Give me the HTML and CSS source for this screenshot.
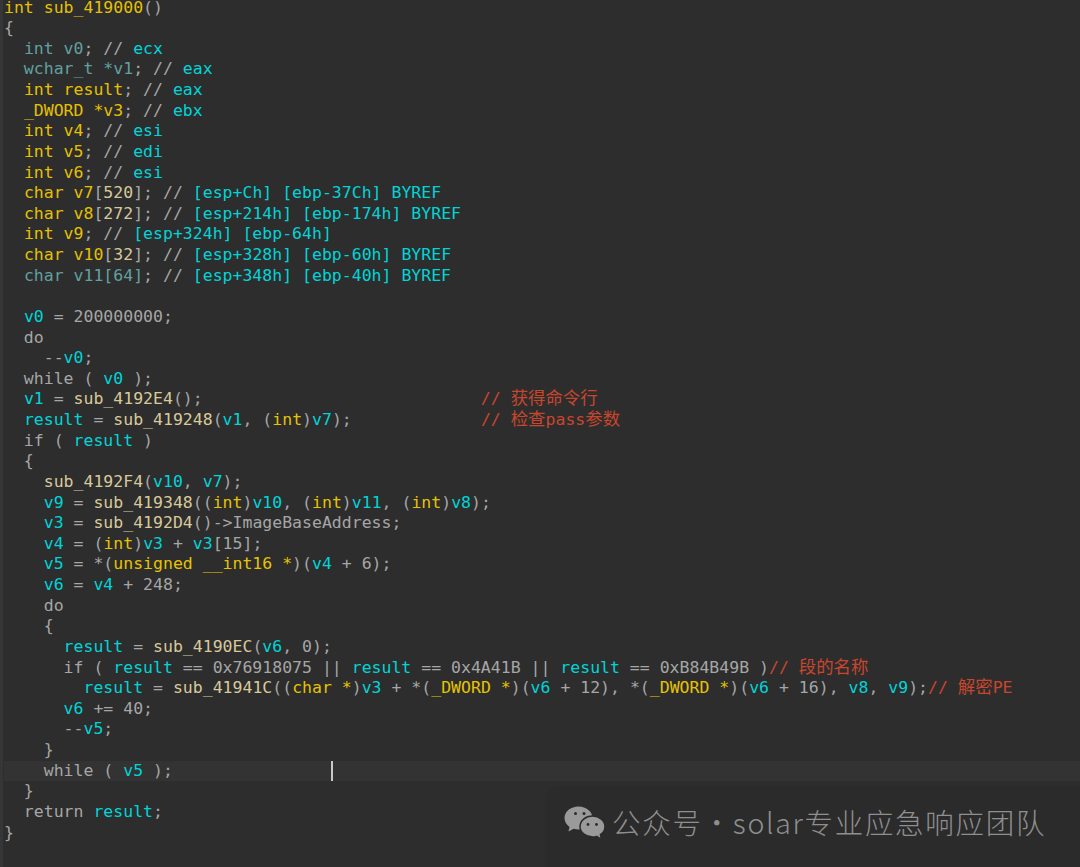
FILE: index.html
```html
<!DOCTYPE html>
<html lang="zh">
<head>
<meta charset="utf-8">
<title>sub_419000</title>
<link rel="stylesheet" href="styles.css">
</head>
<body>
<main class="editor">
<div class="ln"><span class="k">int sub_419000</span><span class="p">()</span></div>
<div class="ln"><span class="p">{</span></div>
<div class="ln">  <span class="kd">int v0</span><span class="p">; // </span><span class="c">ecx</span></div>
<div class="ln"><span class="kd">  wchar_t *v1</span><span class="p">; // </span><span class="c">eax</span></div>
<div class="ln">  <span class="k">int result</span><span class="p">; // </span><span class="c">eax</span></div>
<div class="ln">  <span class="k">_DWORD *v3</span><span class="p">; // </span><span class="c">ebx</span></div>
<div class="ln">  <span class="k">int v4</span><span class="p">; // </span><span class="c">esi</span></div>
<div class="ln">  <span class="k">int v5</span><span class="p">; // </span><span class="c">edi</span></div>
<div class="ln">  <span class="k">int v6</span><span class="p">; // </span><span class="c">esi</span></div>
<div class="ln">  <span class="k">char v7</span><span class="p">[</span><span class="f">520</span><span class="p">]; // </span><span class="c">[esp+Ch] [ebp-37Ch] BYREF</span></div>
<div class="ln">  <span class="k">char v8</span><span class="p">[</span><span class="f">272</span><span class="p">]; // </span><span class="c">[esp+214h] [ebp-174h] BYREF</span></div>
<div class="ln">  <span class="k">int v9</span><span class="p">; // </span><span class="c">[esp+324h] [ebp-64h]</span></div>
<div class="ln">  <span class="k">char v10</span><span class="p">[</span><span class="f">32</span><span class="p">]; // </span><span class="c">[esp+328h] [ebp-60h] BYREF</span></div>
<div class="ln">  <span class="kd">char v11[64]</span><span class="p">; // </span><span class="c">[esp+348h] [ebp-40h] BYREF</span></div>
<div class="ln"> </div>
<div class="ln">  <span class="c">v0</span><span class="p"> = 200000000;</span></div>
<div class="ln"><span class="p">  do</span></div>
<div class="ln"><span class="p">    --</span><span class="c">v0</span><span class="p">;</span></div>
<div class="ln"><span class="p">  while ( </span><span class="c">v0</span><span class="p"> );</span></div>
<div class="ln">  <span class="c">v1</span><span class="p"> = </span><span class="f">sub_4192E4</span><span class="p">();</span><span class="r">                            // <span class="zh">获得命令行</span></span></div>
<div class="ln">  <span class="c">result</span><span class="p"> = </span><span class="f">sub_419248</span><span class="p">(</span><span class="c">v1</span><span class="p">, (</span><span class="y">int</span><span class="p">)</span><span class="c">v7</span><span class="p">);</span><span class="r">             // <span class="zh">检查</span>pass<span class="zh">参数</span></span></div>
<div class="ln"><span class="p">  if ( </span><span class="c">result</span><span class="p"> )</span></div>
<div class="ln"><span class="p">  {</span></div>
<div class="ln">    <span class="f">sub_4192F4</span><span class="p">(</span><span class="c">v10</span><span class="p">, </span><span class="c">v7</span><span class="p">);</span></div>
<div class="ln">    <span class="c">v9</span><span class="p"> = </span><span class="f">sub_419348</span><span class="p">((</span><span class="y">int</span><span class="p">)</span><span class="c">v10</span><span class="p">, (</span><span class="y">int</span><span class="p">)</span><span class="c">v11</span><span class="p">, (</span><span class="y">int</span><span class="p">)</span><span class="c">v8</span><span class="p">);</span></div>
<div class="ln">    <span class="c">v3</span><span class="p"> = </span><span class="f">sub_4192D4</span><span class="p">()-&gt;ImageBaseAddress;</span></div>
<div class="ln">    <span class="c">v4</span><span class="p"> = (</span><span class="y">int</span><span class="p">)</span><span class="c">v3</span><span class="p"> + </span><span class="c">v3</span><span class="p">[15];</span></div>
<div class="ln">    <span class="c">v5</span><span class="p"> = *(</span><span class="y">unsigned __int16 *</span><span class="p">)(</span><span class="c">v4</span><span class="p"> + 6);</span></div>
<div class="ln">    <span class="c">v6</span><span class="p"> = </span><span class="c">v4</span><span class="p"> + 248;</span></div>
<div class="ln"><span class="p">    do</span></div>
<div class="ln"><span class="p">    {</span></div>
<div class="ln">      <span class="c">result</span><span class="p"> = </span><span class="f">sub_4190EC</span><span class="p">(</span><span class="c">v6</span><span class="p">, 0);</span></div>
<div class="ln"><span class="p">      if ( </span><span class="c">result</span><span class="p"> == 0x76918075 || </span><span class="c">result</span><span class="p"> == 0x4A41B || </span><span class="c">result</span><span class="p"> == 0xB84B49B )</span><span class="r">// <span class="zh">段的名称</span></span></div>
<div class="ln">        <span class="c">result</span><span class="p"> = </span><span class="f">sub_41941C</span><span class="p">((</span><span class="y">char *</span><span class="p">)</span><span class="c">v3</span><span class="p"> + *(</span><span class="y">_DWORD *</span><span class="p">)(</span><span class="c">v6</span><span class="p"> + 12), *(</span><span class="y">_DWORD *</span><span class="p">)(</span><span class="c">v6</span><span class="p"> + 16), </span><span class="c">v8</span><span class="p">, </span><span class="c">v9</span><span class="p">);</span><span class="r">// <span class="zh">解密</span>PE</span></div>
<div class="ln">      <span class="c">v6</span><span class="p"> += 40;</span></div>
<div class="ln"><span class="p">      --</span><span class="c">v5</span><span class="p">;</span></div>
<div class="ln"><span class="p">    }</span></div>
<div class="ln cur"><span class="p">    while ( </span><span class="c">v5</span><span class="p"> );</span><span class="caret"></span></div>
<div class="ln"><span class="p">  }</span></div>
<div class="ln"><span class="p">  return </span><span class="c">result</span><span class="p">;</span></div>
<div class="ln"><span class="p">}</span></div>
</main>
<aside class="mark">
<svg class="wx" viewBox="0 0 42 34" width="42" height="34" aria-hidden="true">
<path class="wx-a" d="M14.500 0.500C6.800 0.500 0.500 5.600 0.500 12c0 3.500 1.900 6.700 5 8.900L4.500 25.500l5.200-2.700c1.500.4 3.100.7 4.800.7 7.700 0 14-5.200 14-11.500S22.200 0.500 14.500 0.500z"/>
<path class="wx-b" d="M28.500 10c-6.900 0-12.500 4.700-12.500 10.500S21.600 31 28.500 31c1.500 0 2.900-.2 4.200-.6l4.800 3-1.100-4.700c2.800-1.900 4.600-4.800 4.600-8.200C41 14.700 35.400 10 28.500 10z"/>
<circle class="wx-e" cx="11.500" cy="7.500" r="1.500"/><circle class="wx-e" cx="20" cy="7.500" r="1.500"/>
<circle class="wx-e" cx="24" cy="18.500" r="1.400"/><circle class="wx-e" cx="32.500" cy="18.500" r="1.400"/>
</svg>
<span class="mark-t">公众号 · solar专业应急响应团队</span>
</aside>
</body>
</html>
```
FILE: styles.css
```css
html, body { margin: 0; height: 867px; overflow: hidden; background: #2d2d2d; }
body { position: relative; border-left: 3px solid #363636; box-sizing: border-box; width: 1080px; }
.editor {
  margin-top: -2.500px;
  padding-left: 1px;
  font-family: "DejaVu Sans Mono", monospace;
  font-size: 16.5px;
  color: #a9a9a9;
}
.ln { height: 20.63px; line-height: 20.63px; white-space: pre; position: relative; }
.cur { background: #333333; }
.caret { position: absolute; left: 327px; top: 0; width: 2px; height: 100%; background: #c9c9c9; }
.k { color: #e6c000; }
.kd { color: #62a0a0; }
.f { color: #d8c99a; }
.p { color: #a6a6a6; }
.c { color: #00d4d8; }
.y { color: #e6c300; }
.r { color: #c8462e; }
.zh { font-family: "Noto Sans CJK SC", sans-serif; font-size: 17.4px; line-height: 0; }
.mark {
  position: absolute; right: 0; bottom: 0;
  width: 535px; height: 82px; box-sizing: border-box;
  padding: 0 0 6px 19px;
  display: flex; align-items: center; gap: 6px;
  background: #2b2b2b;
  border-radius: 16px 0 0 0;
}
.wx { flex: none; }
.wx-a, .wx-b { fill: #9a9a9a; }
.wx-b { stroke: #2b2b2b; stroke-width: 1.500; }
.wx-e { fill: #2b2b2b; }
.mark-t {
  font-family: "Noto Sans CJK SC", sans-serif;
  font-weight: 300;
  font-size: 28.5px;
  letter-spacing: 1.700px;
  word-spacing: -8px;
  color: #8f8f8f;
  white-space: nowrap;
  margin-bottom: 4px;
}
```
